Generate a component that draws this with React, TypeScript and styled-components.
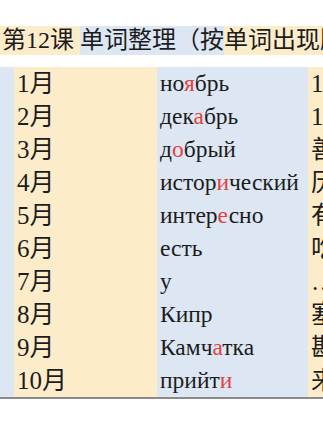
import React from "react";
import styled, { createGlobalStyle } from "styled-components";

const GlobalStyle = createGlobalStyle`
  html, body {
    margin: 0;
    padding: 0;
    background: #ffffff;
    overflow: hidden;
  }
  body {
    width: 323px;
    height: 430px;
  }
`;

const BEIGE = "#fcecca";
const BLUE = "#dde7f4";
const FONT = `"Liberation Serif", "Noto Sans CJK SC", serif`;

const Page = styled.div`
  width: 323px;
  height: 430px;
  overflow: hidden;
  padding-top: 26px;
  box-sizing: border-box;
  font-family: ${FONT};
  color: #1c1c1c;
`;

const Title = styled.div`
  display: flex;
  white-space: nowrap;
  font-size: 24px;
  line-height: 29px;
  height: 29px;
`;

const TitlePart = styled.span<{ $bg: string; $pl?: number; $pr?: number }>`
  background: ${(p) => p.$bg};
  padding-left: ${(p) => p.$pl ?? 0}px;
  padding-right: ${(p) => p.$pr ?? 0}px;
  flex: none;
`;

const Table = styled.div`
  margin-top: 12px;
  display: grid;
  grid-template-columns: 14px 143px 151px 200px;
  grid-auto-rows: 33px;
  width: 508px;
  border-bottom: 2px solid #8a8a8a;
  line-height: 33px;
`;

const Cell = styled.div<{ $bg: string; $size?: number }>`
  background: ${(p) => p.$bg};
  font-size: ${(p) => p.$size ?? 25}px;
  padding-left: 3px;
  white-space: nowrap;
  overflow: hidden;
`;

const Red = styled.span`
  color: #e2433f;
`;

type Row = { month: string; word: [string, string, string]; zh: string };

const rows: Row[] = [
  { month: "1月", word: ["но", "я", "брь"], zh: "11月" },
  { month: "2月", word: ["дек", "а", "брь"], zh: "12月" },
  { month: "3月", word: ["д", "о", "брый"], zh: "善良的" },
  { month: "4月", word: ["истор", "и", "ческий"], zh: "历史的" },
  { month: "5月", word: ["интер", "е", "сно"], zh: "有趣" },
  { month: "6月", word: ["есть", "", ""], zh: "吃" },
  { month: "7月", word: ["у", "", ""], zh: "…旁边" },
  { month: "8月", word: ["Кипр", "", ""], zh: "塞浦路斯" },
  { month: "9月", word: ["Камч", "а", "тка"], zh: "勘察加" },
  { month: "10月", word: ["прийт", "и", ""], zh: "来到" },
];

export default function App() {
  return (
    <>
      <GlobalStyle />
      <Page>
        <Title>
          <TitlePart $bg={BEIGE} $pl={2} $pr={6}>
            第12课
          </TitlePart>
          <TitlePart $bg={BLUE}>单词整理（按</TitlePart>
          <TitlePart $bg={BEIGE} $pr={40}>
            单词出现顺序）
          </TitlePart>
        </Title>
        <Table>
          {rows.map((r) => (
            <React.Fragment key={r.month}>
              <Cell $bg={BLUE} />
              <Cell $bg={BEIGE}>{r.month}</Cell>
              <Cell $bg={BLUE} $size={23.5}>
                {r.word[0]}
                {r.word[1] && <Red>{r.word[1]}</Red>}
                {r.word[2]}
              </Cell>
              <Cell $bg={BEIGE}>{r.zh}</Cell>
            </React.Fragment>
          ))}
        </Table>
      </Page>
    </>
  );
}
